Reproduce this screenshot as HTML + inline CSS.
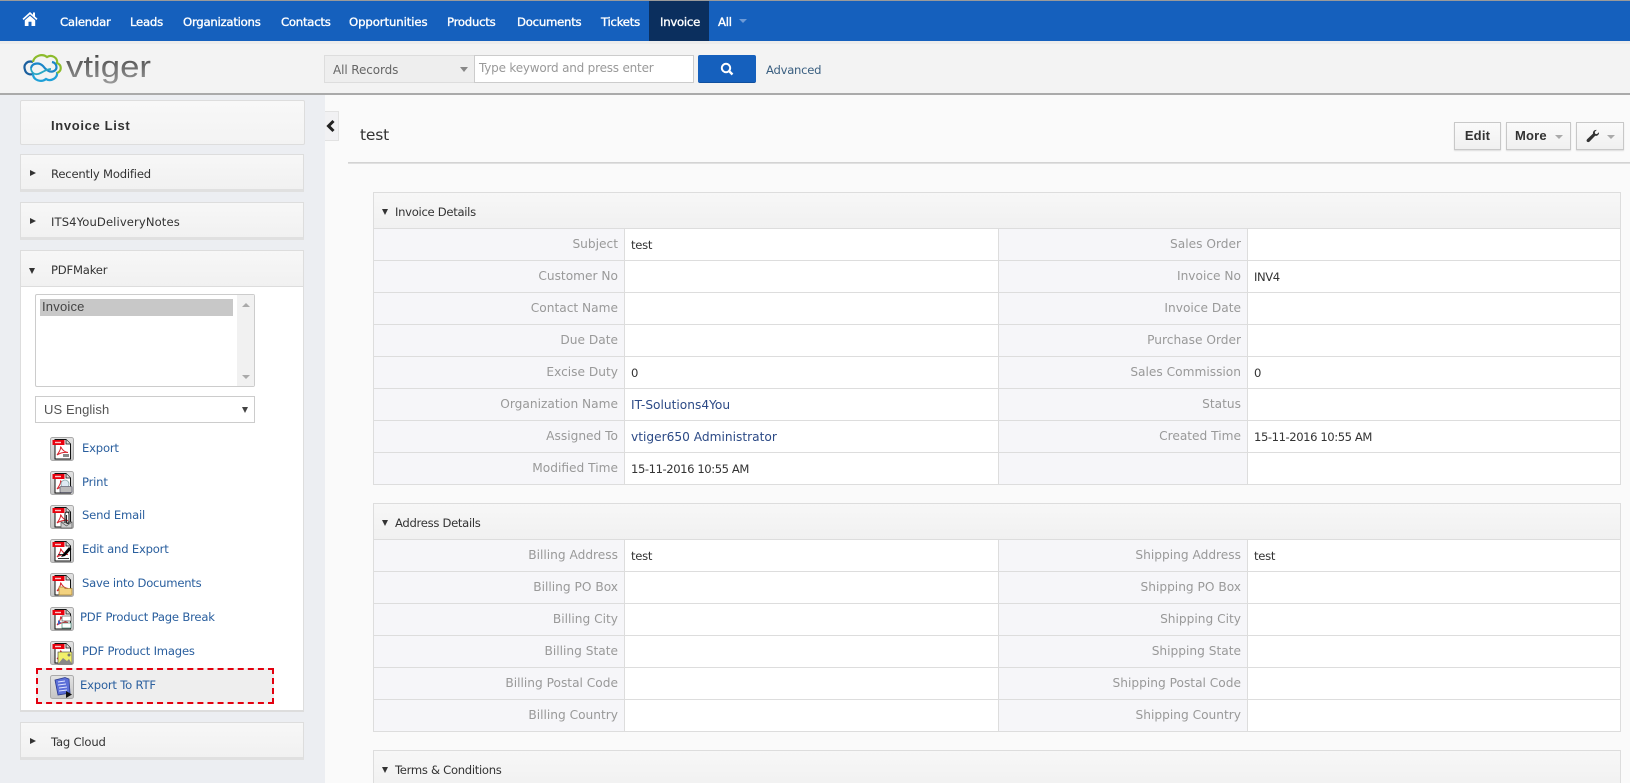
<!DOCTYPE html>
<html><head><meta charset="utf-8"><title>Invoice</title>
<style>
*{box-sizing:border-box}
html,body{margin:0;padding:0;width:1630px;height:783px;overflow:hidden;background:#fafafa;font-family:"DejaVu Sans","Liberation Sans",sans-serif;font-size:12px;color:#333}
#root{position:absolute;left:0;top:0;width:1630px;height:783px;overflow:hidden;background:#fafafa}
.a{position:absolute;white-space:nowrap}
#nav{left:0;top:0;width:1630px;height:41px;background:#1560bd;border-top:1px solid #9a9a9a}
.n{position:absolute;top:13px;color:#fff;font-size:11.7px;line-height:16px;letter-spacing:-.25px;-webkit-text-stroke:.35px #fff;white-space:nowrap}
#hdr{left:0;top:41px;width:1630px;height:54px;background:#f3f3f3;border-bottom:2px solid #aaa;border-top:3px solid #ececec}
#side{left:0;top:95px;width:325px;height:688px;background:#eceef2}
.acc{position:absolute;left:20px;width:284px;background:linear-gradient(#f7f7f7,#f1f1f1);border:1px solid #ddd;border-bottom:3px solid #e0e0e0}
.acc span{position:absolute;left:30px;top:11px;font-size:11.6px;line-height:16px;color:#333;letter-spacing:-.2px;white-space:nowrap}
.tri{position:absolute;width:0;height:0}
.tr{border-left:6px solid #333;border-top:3.5px solid transparent;border-bottom:3.5px solid transparent}
.td{border-top:6px solid #333;border-left:3.5px solid transparent;border-right:3.5px solid transparent}
.lnk{position:absolute;color:#2a5f9e;font-size:11.6px;line-height:16px;letter-spacing:-.2px;white-space:nowrap}
.ic{position:absolute;left:50px;width:24px;height:24px}
.blk{position:absolute;left:373px;width:1248px;border:1px solid #ddd;border-bottom:0;background:#fff;overflow:hidden}
.bh{height:36px;background:linear-gradient(#f7f7f7,#f1f1f1);border-bottom:1px solid #ddd;position:relative}
.bh span{position:absolute;left:21px;top:11px;font-size:11.6px;line-height:16px;letter-spacing:-.3px;color:#333;white-space:nowrap}
.bh .tri{left:8px;top:16px}
table{border-collapse:separate;border-spacing:0;table-layout:fixed;width:1246px}
td{height:32px;border-bottom:1px solid #ddd;padding:0;font-size:11.6px;white-space:nowrap;overflow:hidden}
td.l{background:#f6f6f9;border-right:1px solid #ddd;text-align:right;color:#999;padding-right:6px;padding-bottom:2px;font-size:12.2px;letter-spacing:0}
td.l1{width:251px}
td.l2{width:249px}
td.v{background:#fff;padding-left:6px;padding-top:1px;color:#333;letter-spacing:-.43px}
td.v1{width:374px;border-right:1px solid #ddd}
td.v2{width:372px}
td.b{color:#2c4a86;font-size:12.2px;letter-spacing:0}
.btn{position:absolute;top:122px;height:28px;border:1px solid #c8c8c8;background:linear-gradient(#fafafa,#f0f0f0);box-shadow:0 1px 1px #ddd;color:#333;font-size:12px;font-weight:bold;line-height:25px;letter-spacing:-.2px;white-space:nowrap}
.car{position:absolute;width:0;height:0;border-top:4px solid #aaa;border-left:4px solid transparent;border-right:4px solid transparent}
</style></head><body>
<div id="root">
<svg width="0" height="0" style="position:absolute"><defs>
<linearGradient id="bgg" x1="0" y1="0" x2="0" y2="1"><stop offset="0" stop-color="#e4e4e4"/><stop offset="1" stop-color="#c4c4c4"/></linearGradient>
<symbol id="pdf" viewBox="0 0 24 24">
<rect x=".5" y=".5" width="23" height="23" rx="2" fill="url(#bgg)" stroke="#aaa"/>
<path d="M5 2.500H16L20.500 7V22H5Z" fill="#fff" stroke="#111" stroke-width="1"/>
<path d="M16 2.500V7H20.500" fill="#ddd" stroke="#111" stroke-width=".8"/>
<rect x="2.500" y="3" width="12" height="5" fill="#e8000d"/>
<rect x="5" y="4.800" width="6" height="1.400" fill="#f8c8c8"/>
<path d="M7 18C10 14 11 11 10.500 9.500C13 14 15 15 18 15.500C14 15 10 16 7 18Z" fill="none" stroke="#d8202a" stroke-width="1"/>
</symbol>
</defs></svg>

<div class="a" id="nav">
<svg style="position:absolute;left:22px;top:10px" width="16" height="16" viewBox="0 0 16 16"><path d="M8 1L0.500 7.800 1.600 9 8 3.300 14.400 9 15.500 7.800 13 5.500V1.500H11V3.700Z" fill="#fff"/><path d="M2.800 9.300L8 4.700 13.200 9.300V15H9.500V10.800H6.500V15H2.800Z" fill="#fff"/></svg>
<span class="n" style="left:60px">Calendar</span>
<span class="n" style="left:130px">Leads</span>
<span class="n" style="left:183px">Organizations</span>
<span class="n" style="left:281px">Contacts</span>
<span class="n" style="left:349px;letter-spacing:-.1px">Opportunities</span>
<span class="n" style="left:447px">Products</span>
<span class="n" style="left:517px">Documents</span>
<span class="n" style="left:601px">Tickets</span>
<div style="position:absolute;left:649px;top:0;width:60px;height:40px;background:#0b2f5e"></div>
<span class="n" style="left:660px">Invoice</span>
<span class="n" style="left:718px">All</span>
<div class="car" style="left:739px;top:18px;border-top-color:#6d9ad6"></div>
</div>

<div class="a" id="hdr"></div>
<svg class="a" style="left:22px;top:51px" width="42" height="34" viewBox="0 0 42 34" fill="none">
<path d="M11 11C5 9 1 14 3 19C4 23 8 24 11 23" stroke="#1a5f9e" stroke-width="2.200"/>
<path d="M11 23C11 29 19 32 24 28C29 31 36 27 35 21" stroke="#1fa0d8" stroke-width="2.200"/>
<path d="M9 17C10 12 17 11 21 15C24 19 28 22 32 20C36 18 35 12 30 11" stroke="#1c86c8" stroke-width="2.200"/>
<path d="M11 11C12 5 20 2 25 6C30 3 36 7 35 12C40 14 40 20 35 22" stroke="#8cbb2c" stroke-width="2.200"/>
<path d="M9 17C9 21 12 24 16 23C20 22 24 18 29 18" stroke="#2aa7c4" stroke-width="1.800"/>
</svg>
<svg class="a" style="left:64px;top:48px" width="96" height="40"><defs><linearGradient id="lg" x1="0" y1="0" x2="0" y2="1"><stop offset="0" stop-color="#3a3a3a"/><stop offset="1" stop-color="#9a9a9a"/></linearGradient></defs><text x="2" y="29" font-family="Liberation Sans" font-size="31" fill="url(#lg)" textLength="85" lengthAdjust="spacingAndGlyphs">vtiger</text></svg>

<div class="a" style="left:324px;top:55px;width:152px;height:28px;background:#eee;border:1px solid #ddd;font-size:12px;line-height:28px;padding-left:8px;color:#666;letter-spacing:-.1px">All Records<div class="car" style="left:135px;top:11px;border-top:5px solid #888"></div></div>
<div class="a" style="left:474px;top:55px;width:220px;height:28px;background:#fff;border:1px solid #ccc;font-size:12px;line-height:25px;padding-left:4px;color:#999;letter-spacing:-.2px">Type keyword and press enter</div>
<div class="a" style="left:698px;top:55px;width:58px;height:28px;background:#1560bd;border-radius:2px;border-bottom:1px solid #0f4f9f"></div>
<svg class="a" style="left:720px;top:62px" width="14" height="14" viewBox="0 0 14 14"><circle cx="6" cy="6" r="4.200" fill="none" stroke="#fff" stroke-width="2"/><path d="M9 9L12.500 12.500" stroke="#fff" stroke-width="2.400"/></svg>
<div class="a" style="left:766px;top:62px;font-size:11.600px;line-height:16px;color:#3a5f80;letter-spacing:-.25px">Advanced</div>

<div class="a" id="side"></div>
<div class="a" style="left:20px;top:100px;width:285px;height:45px;background:linear-gradient(#f8f8f8,#f3f3f3);border:1px solid #ddd;border-radius:2px"><span style="position:absolute;left:30px;top:17px;font-size:13px;line-height:16px;font-weight:bold;color:#333;font-family:'Liberation Sans',sans-serif;letter-spacing:.65px">Invoice List</span></div>
<div class="acc" style="top:154px;height:38px"><span>Recently Modified</span><div class="tri tr" style="left:9px;top:15px"></div></div>
<div class="acc" style="top:202px;height:38px"><span style="letter-spacing:.1px">ITS4YouDeliveryNotes</span><div class="tri tr" style="left:9px;top:15px"></div></div>
<div class="a" style="left:20px;top:250px;width:284px;height:462px;background:#fff;border:1px solid #ddd;border-bottom-width:2px"></div>
<div class="acc" style="top:250px;height:37px;border-bottom:1px solid #ddd"><span>PDFMaker</span><div class="tri td" style="left:8px;top:17px"></div></div>

<div class="a" style="left:35px;top:294px;width:220px;height:93px;background:#fff;border:1px solid #ccc;border-radius:2px">
<div style="position:absolute;left:4px;top:4px;width:193px;height:17px;background:#c8c8c8;font-family:'Liberation Sans',sans-serif;font-size:13px;line-height:16px;padding-left:2px;color:#444;letter-spacing:.2px">Invoice</div>
<div style="position:absolute;right:0;top:0;width:17px;height:91px;background:#f1f1f1"></div>
<div style="position:absolute;left:206px;top:8px;width:0;height:0;border-bottom:4px solid #aaa;border-left:4px solid transparent;border-right:4px solid transparent"></div>
<div style="position:absolute;left:206px;top:80px;width:0;height:0;border-top:4px solid #aaa;border-left:4px solid transparent;border-right:4px solid transparent"></div>
</div>
<div class="a" style="left:35px;top:396px;width:220px;height:27px;background:#fff;border:1px solid #ccc;font-family:'Liberation Sans',sans-serif;font-size:13px;line-height:25px;padding-left:8px;color:#555;letter-spacing:.1px">US English<div style="position:absolute;left:206px;top:10px;width:0;height:0;border-top:6px solid #444;border-left:3.500px solid transparent;border-right:3.500px solid transparent"></div></div>

<svg class="ic" style="top:437px" viewBox="0 0 24 24"><use href="#pdf"/><rect x="13" y="17" width="6" height="3" fill="#888"/></svg>
<svg class="ic" style="top:471px" viewBox="0 0 24 24"><use href="#pdf"/><circle cx="15" cy="13" r="4" fill="#dfeaf3" stroke="#8aa" stroke-width=".8"/><rect x="10" y="15.500" width="12" height="6" rx="1" fill="#bbb" stroke="#667" stroke-width=".8"/></svg>
<svg class="ic" style="top:505px" viewBox="0 0 24 24"><use href="#pdf"/><rect x="11" y="17" width="11" height="6" fill="#ccc" stroke="#555" stroke-width=".7"/><path d="M11 17L16.500 21 22 17" fill="none" stroke="#555" stroke-width=".7"/><path d="M15 18V9C15 6.500 19 6.500 19 9V17C19 19 16.500 19 16.500 17V10" fill="none" stroke="#222" stroke-width="1.100"/></svg>
<svg class="ic" style="top:539px" viewBox="0 0 24 24"><use href="#pdf"/><rect x="8" y="15" width="6" height="1" fill="#333"/><rect x="8" y="19" width="11" height="1" fill="#333"/><path d="M11 18L13 15 19 8 21.500 10 15 17Z" fill="#000"/></svg>
<svg class="ic" style="top:573px" viewBox="0 0 24 24"><use href="#pdf"/><path d="M9 14H14L15 15.500H22V22H9Z" fill="#f3d27f" stroke="#a8853a" stroke-width=".8"/></svg>
<svg class="ic" style="top:607px" viewBox="0 0 24 24"><use href="#pdf"/><rect x="12" y="9" width="9" height="5" fill="#fff" stroke="#555" stroke-width=".7"/><rect x="12" y="16" width="9" height="5" fill="#fff" stroke="#487" stroke-width=".7"/><path d="M8 13V18L11 15.500Z" fill="#3a63c8"/></svg>
<svg class="ic" style="top:641px" viewBox="0 0 24 24"><use href="#pdf"/><rect x="8" y="11" width="14" height="12" fill="#f2f06a" stroke="#555" stroke-width=".7"/><circle cx="19" cy="14" r="1.500" fill="#777"/><path d="M8 23L13 17 17 20 19 18 22 23Z" fill="#888"/></svg>

<div class="a" style="left:36px;top:668px;width:238px;height:36px;background:#eee;border:2px dashed #e3000f"></div>
<svg class="ic" style="top:675px" viewBox="0 0 24 24"><rect x=".5" y=".5" width="23" height="23" rx="2" fill="url(#bgg)" stroke="#aaa"/><path d="M5 5L15 2.500 19 4 20 18 8 20Z" fill="#5c6fd8" stroke="#2a3a8c" stroke-width=".8"/><path d="M8 7L15 6M8 10L16 9M9 13L17 12M9 16L17 15" stroke="#dfe4ff" stroke-width="1"/><path d="M16 16V23L22 19.500Z" fill="#111"/></svg>

<span class="lnk" style="left:82px;top:440px">Export</span>
<span class="lnk" style="left:82px;top:474px">Print</span>
<span class="lnk" style="left:82px;top:507px">Send Email</span>
<span class="lnk" style="left:82px;top:541px">Edit and Export</span>
<span class="lnk" style="left:82px;top:575px;letter-spacing:-.25px">Save into Documents</span>
<span class="lnk" style="left:80px;top:609px">PDF Product Page Break</span>
<span class="lnk" style="left:82px;top:643px">PDF Product Images</span>
<span class="lnk" style="left:80px;top:677px">Export To RTF</span>
<div class="acc" style="top:722px;height:38px"><span>Tag Cloud</span><div class="tri tr" style="left:9px;top:15px"></div></div>

<div class="a" style="left:325px;top:111px;width:14px;height:30px;background:#f1f1f3;border:1px solid #e2e2e2;border-left:0"></div>
<svg class="a" style="left:325px;top:119px" width="12" height="14" viewBox="0 0 12 14"><path d="M8.500 2L3.500 7 8.500 12" fill="none" stroke="#222" stroke-width="3"/></svg>
<div class="a" style="left:360px;top:124px;font-size:15.500px;line-height:22px;color:#333;letter-spacing:-.2px">test</div>
<div class="a" style="left:348px;top:162px;width:1282px;height:2px;background:linear-gradient(#ccc,#e6e6e6)"></div>
<div class="btn" style="left:1454px;width:47px;text-align:center;font-family:'Liberation Sans',sans-serif;font-size:13px;letter-spacing:.2px">Edit</div>
<div class="btn" style="left:1506px;width:65px;padding-left:8px;font-family:'Liberation Sans',sans-serif;font-size:13px;letter-spacing:.2px">More<div class="car" style="left:48px;top:12px"></div></div>
<div class="btn" style="left:1576px;width:48px"><svg style="position:absolute;left:9px;top:6px" width="14" height="14" viewBox="0 0 14 14"><path d="M13 3.200C13.300 5.400 11.400 7.200 9.200 6.800L3.500 12.600C2.800 13.300 1.700 13.300 1 12.600 .4 11.900.4 10.900 1.100 10.200L7 4.600C6.600 2.400 8.500.4 10.800.9L8.800 2.900 9.100 4.700 10.900 5.100Z" fill="#333"/></svg><div class="car" style="left:30px;top:12px"></div></div>

<div class="blk" style="top:192px">
<div class="bh"><div class="tri td"></div><span>Invoice Details</span></div>
<table>
<tr><td class="l l1">Subject</td><td class="v v1" style="letter-spacing:-.3px">test</td><td class="l l2">Sales Order</td><td class="v v2"></td></tr>
<tr><td class="l">Customer No</td><td class="v v1"></td><td class="l">Invoice No</td><td class="v v2">INV4</td></tr>
<tr><td class="l">Contact Name</td><td class="v v1"></td><td class="l">Invoice Date</td><td class="v v2"></td></tr>
<tr><td class="l">Due Date</td><td class="v v1"></td><td class="l">Purchase Order</td><td class="v v2"></td></tr>
<tr><td class="l">Excise Duty</td><td class="v v1">0</td><td class="l">Sales Commission</td><td class="v v2">0</td></tr>
<tr><td class="l">Organization Name</td><td class="v v1 b">IT-Solutions4You</td><td class="l">Status</td><td class="v v2"></td></tr>
<tr><td class="l">Assigned To</td><td class="v v1 b">vtiger650 Administrator</td><td class="l">Created Time</td><td class="v v2">15-11-2016 10:55 AM</td></tr>
<tr><td class="l">Modified Time</td><td class="v v1">15-11-2016 10:55 AM</td><td class="l"></td><td class="v v2"></td></tr>
</table></div>

<div class="blk" style="top:503px">
<div class="bh"><div class="tri td"></div><span>Address Details</span></div>
<table>
<tr><td class="l l1">Billing Address</td><td class="v v1" style="letter-spacing:-.3px">test</td><td class="l l2">Shipping Address</td><td class="v v2" style="letter-spacing:-.3px">test</td></tr>
<tr><td class="l">Billing PO Box</td><td class="v v1"></td><td class="l">Shipping PO Box</td><td class="v v2"></td></tr>
<tr><td class="l">Billing City</td><td class="v v1"></td><td class="l">Shipping City</td><td class="v v2"></td></tr>
<tr><td class="l">Billing State</td><td class="v v1"></td><td class="l">Shipping State</td><td class="v v2"></td></tr>
<tr><td class="l">Billing Postal Code</td><td class="v v1"></td><td class="l">Shipping Postal Code</td><td class="v v2"></td></tr>
<tr><td class="l">Billing Country</td><td class="v v1"></td><td class="l">Shipping Country</td><td class="v v2"></td></tr>
</table></div>

<div class="blk" style="top:750px;height:33px">
<div class="bh"><div class="tri td"></div><span>Terms &amp; Conditions</span></div>
</div>
</div>
</body></html>
